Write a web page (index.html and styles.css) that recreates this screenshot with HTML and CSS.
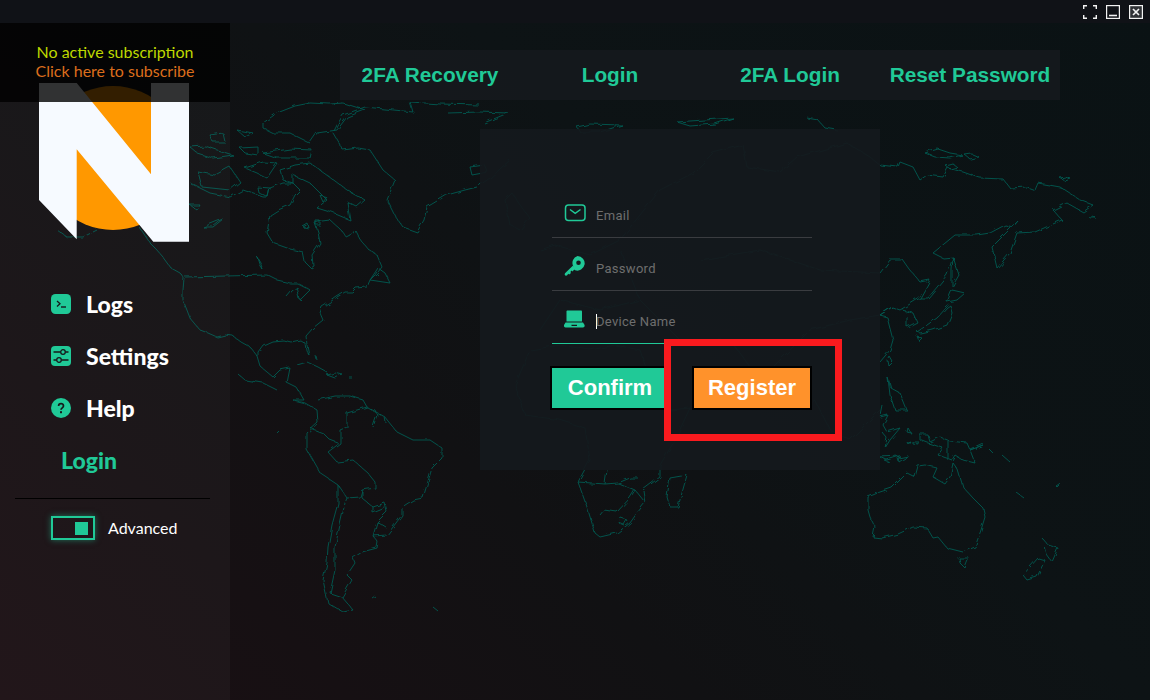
FILE: index.html
```html
<!DOCTYPE html>
<html lang="en">
<head>
    <meta charset="UTF-8">
    <meta name="viewport" content="width=device-width, initial-scale=1.0">
    <title>Login</title>
    <link rel="stylesheet" href="styles.css">
</head>
<body>
    <div class="app">
        <!-- World map behind everything -->
        <svg class="world-map" viewBox="0 0 1150 700" fill="none">
            <defs>
                <filter id="coast" x="0" y="0" width="100%" height="100%">
                    <feTurbulence type="fractalNoise" baseFrequency="0.11" numOctaves="2" seed="4"/>
                    <feDisplacementMap in="SourceGraphic" scale="5"/>
                </filter>
            </defs>
            <g class="coastlines">
            <!-- North America -->
            <path d="M57 230 67 237 83 237 97 230 M140 228 150 243 156 249 163 257 171 268 180 273 184 278 183 290 183 300 190 318 200 330 208 333 217 337 225 335 233 336 241 342 250 347 258 357 261 367 273 377 280 370 290 368 287 383 297 388 300 393 304 400 M258 357 258 352 263 345 272 341 283 340 291 342 300 340 305 343 306 350 309 355 307 345 306 336 313 328 323 320 320 313 322 307 330 302 337 297 345 292 352 292 356 288 367 287 370 280 378 272 382 267 377 255 368 249 363 243 358 236 355 230 351 236 347 238 341 230 330 220 322 221 315 223 318 232 320 243 316 249 312 255 313 265 310 267 305 262 303 252 290 249 273 243 267 233 270 215 278 210 290 205 295 195 300 190 293 183 283 183 270 188 268 197 263 197 243 190 230 197 210 193 190 183"/>
            <path d="M185 277 226 276 267 275 277 280 290 283 297 283 305 287 M237 373 245 380 263 383 277 390 M378 268 370 280 390 283 385 273 378 268Z"/>
            <path d="M263 123 277 113 295 106 310 103 330 104 343 103 365 110 347 117 337 130 317 133 310 143 290 133 273 133 263 128Z M280 170 295 165 310 163 327 175 347 190 365 200 357 207 347 202 350 220 333 213 317 208 327 200 310 183 293 175 293 183 283 180Z M237 130 253 133 245 137Z M240 148 258 147 258 155 245 153Z M263 153 290 149 312 150 310 158 277 158Z M190 147 205 146 217 150 233 155 213 158 197 153Z M210 135 223 133 225 142 213 142Z M198 172 215 175 230 167 240 182 230 190 202 187Z M245 168 263 162 277 163 267 178 257 173Z M257 187 270 188 268 197 258 192Z M320 195 327 197 323 202Z M203 227 223 219 213 227Z M190 205 200 205 197 210Z M257 257 260 262 263 270 260 266Z M287 297 292 291 297 287 300 300 310 290 304 286 M303 227 308 224 309 228Z M316 221 320 221 320 225 316 225Z M297 365 307 362 318 367 327 372 M327 375 335 373 343 375 335 378Z M348 377 352 377 M316 356 317 360"/>
            <!-- Greenland -->
            <path d="M333 133 343 150 358 148 370 150 383 170 395 180 387 200 395 216 403 227 417 232 424 220 427 207 447 195 465 190 477 187 490 178 510 160 M343 115 365 107 413 112 410 102 440 104 480 105 M448 113 480 112 508 113 484 123 M343 115 337 125 333 133"/>
            <!-- South America -->
            <path d="M304 400 293 400 305 403 317 410 318 423 307 433 307 450 320 473 338 485 338 503 332 525 328 547 327 563 323 580 328 603 343 612 353 610 342 597 352 580 347 575 355 563 353 558 362 552 377 548 378 542 373 536 387 535 402 515 402 507 413 500 423 498 432 468 442 458 442 448 430 440 413 440 397 432 385 417 367 407 363 400 350 396 335 396 318 400"/>
            <path d="M367 407 347 413 347 427 340 430 340 443 328 452 337 462 353 460 367 472 375 482 375 488 362 490 362 498 373 507 385 503 387 512 377 522 387 528 M338 485 347 498 345 503 335 547 335 570 330 593 342 597 M347 498 360 497 362 490 M373 507 373 513 385 508 M377 522 373 536 M310 428 323 433 330 440 338 443 M373 427 377 415 375 410 M385 417 386 423 M372 598 375 596 M433 607 438 611 M277 433 279 431"/>
            <!-- Africa -->
            <path d="M578 482 587 507 595 533 600 537 617 533 630 523 637 513 645 503 643 490 660 477 660 465 675 440 690 408 670 410 650 380 640 350 615 345 590 350 560 345 530 350 515 385 525 415 560 420 585 428 590 460 578 482Z M670 478 687 475 678 507 670 507 667 497 670 478Z M578 482 605 484 618 483 635 490 630 498 617 512 604 510 600 515 M605 484 607 470 M618 483 630 478 638 478 M635 490 643 500 M624 525 627 520 621 518 619 523Z"/>
            <!-- Europe and Asia behind the form -->
            <path d="M470 167 485 165 488 172 472 175Z M505 200 512 193 520 205 530 218 520 230 510 225Z M540 250 555 245 590 255 620 240 640 215 660 190 693 173 713 153 743 145 747 167 780 172 797 157 847 143 870 157 880 165 M620 250 640 300 680 340 730 340 760 380 790 350 810 330 850 320 880 315 M640 300 600 310 560 300 540 330 M700 260 760 250 820 270 880 273 M577 127 590 124 622 125 600 132 580 132Z M677 122 690 121 733 118 715 124 690 126Z M807 118 818 120 825 128 837 130 M780 380 800 410 815 400 830 430 850 440 880 410 M892 307 880 315"/>
            <!-- Russia and the far east -->
            <path d="M880 165 898 167 900 162 913 167 920 180 927 175 943 177 948 168 963 172 980 178 1003 179 1010 188 1027 187 1035 190 1038 183 1060 187 1080 200 1093 205 1083 212 1067 203 1053 210 1062 220 1035 232 1017 233 1010 253 997 268 992 247 1018 221 1013 227 1005 225 990 233 977 235 955 235 933 253 943 258 953 257 947 275 928 298 920 298 930 280 920 282 910 270 903 260 890 260 880 273 M920 298 900 310 892 307 880 315 887 317 893 340 890 350 880 362 M902 310 913 313 917 322 907 327 907 317"/>
            <path d="M953 257 959 275 952 287 952 270Z M952 290 965 293 957 300 947 302Z M950 305 952 313 947 325 933 330 920 333 917 332 937 318 947 307Z M917 336 922 338 919 341Z M890 357 893 362 889 366 888 361Z M888 378 891 388 900 393 907 410 895 410 890 395Z M882 405 880 415 M925 153 938 149 950 153 962 155 950 158 935 157Z M965 155 972 154 979 157 970 159Z M1060 178 1065 177 1071 179 1065 181Z M1088 217 1092 216 1096 218 1091 218Z M945 165 952 163 957 167 950 169Z"/>
            <!-- Indonesia and Oceania -->
            <path d="M880 417 888 415 883 425 887 432 900 428 890 440 885 448 887 438 882 432 M908 428 911 433 907 432Z M907 442 910 441 908 444Z M912 441 918 441 918 444 912 443Z M880 457 900 456 887 460Z M898 458 908 456 899 462Z M884 460 889 462"/>
            <path d="M920 435 928 435 930 442 940 437 950 441 967 443 970 450 983 445 970 450 975 463 963 460 955 455 952 460 938 455 943 448 928 443 920 440Z M948 441 948 458 M970 449 983 443 M989 449 994 454 M1002 455 1010 462 M1017 493 1024 498 M1055 485 1061 481 1056 486Z"/>
            <path d="M868 497 880 492 892 488 900 480 907 473 915 477 918 466 925 465 937 468 933 477 945 484 950 477 953 463 958 470 963 487 972 497 983 508 985 517 981 530 975 547 963 552 947 548 938 537 933 538 927 528 913 527 898 534 882 538 873 537 875 527 870 517 868 510Z M959 558 969 558 965 568 960 563Z M1042 538 1048 545 1058 548 1052 562 1047 555 1045 547 M1038 558 1045 560 1037 577 1027 580 1023 575 1030 567Z"/>
            </g>
        </svg>

        <div class="titlebar">
            <svg class="win-icon" viewBox="0 0 14 14" fill="none" stroke="#f2f2f2" stroke-width="1.4">
                <path d="M0.7 4V0.7H4M10 0.7H13.3V4M13.3 10V13.3H10M4 13.3H0.7V10"/>
            </svg>
            <svg class="win-icon" viewBox="0 0 14 14" fill="none" stroke="#f2f2f2" stroke-width="1.2">
                <rect x="0.6" y="0.6" width="12.8" height="12.8"/>
                <path d="M3 10.5H11" stroke-width="1.6"/>
            </svg>
            <svg class="win-icon close-icon" viewBox="0 0 14 14" fill="none" stroke="#f2f2f2" stroke-width="1.2">
                <rect x="0.6" y="0.6" width="12.8" height="12.8" fill="#303236"/>
                <path d="M4 4 10 10M10 4 4 10" stroke-width="1.7"/>
            </svg>
        </div>

        <div class="shell">
            <aside class="sidebar">
                <div class="subscription">
                    <div class="sub-status">No active subscription</div>
                    <div class="sub-link">Click here to subscribe</div>
                </div>

                <svg class="logo" viewBox="39 83 150 159">
                    <circle cx="113" cy="158" r="72" fill="#ff9800"/>
                    <path d="M39 83H76.7L151 174.3V83H189V241.7H153.3L76.7 149.3V239.3L39 200Z" fill="#f6faff"/>
                </svg>

                <nav class="side-nav">
                    <a class="side-link">
                        <svg class="side-icon" viewBox="0 0 20 20">
                            <rect width="20" height="20" rx="4.5" fill="#20c997"/>
                            <path d="M6 7 9 9.7 6 12.4" fill="none" stroke="#16181a" stroke-width="1.3"/>
                            <path d="M10 13H15" stroke="#16181a" stroke-width="1.4"/>
                        </svg>
                        Logs
                    </a>
                    <a class="side-link">
                        <svg class="side-icon" viewBox="0 0 20 20">
                            <rect width="20" height="20" rx="4" fill="#20c997"/>
                            <path d="M2.500 6H9.500M14.500 6H17.500M2.500 14H5.500M10.500 14H17.500" stroke="#16181a" stroke-width="1.3"/>
                            <circle cx="12" cy="6" r="2.300" fill="none" stroke="#16181a" stroke-width="1.3"/>
                            <circle cx="8" cy="14" r="2.300" fill="none" stroke="#16181a" stroke-width="1.3"/>
                        </svg>
                        Settings
                    </a>
                    <a class="side-link">
                        <svg class="side-icon" viewBox="0 0 20 20">
                            <circle cx="10" cy="10" r="10" fill="#20c997"/>
                            <path d="M7.600 8C7.600 4.900 12.500 4.900 12.500 8 12.500 9.900 10 9.800 10 11.800" fill="none" stroke="#16181a" stroke-width="1.7"/>
                            <rect x="9" y="13.200" width="2" height="2" fill="#16181a"/>
                        </svg>
                        Help
                    </a>
                    <a class="side-link login-link">Login</a>
                </nav>

                <div class="side-divider"></div>

                <div class="advanced">
                    <div class="toggle"><span class="toggle-knob"></span></div>
                    <span class="advanced-label">Advanced</span>
                </div>
            </aside>

            <main class="content">
                <div class="top-tabs">
                    <a class="top-tab">2FA Recovery</a>
                    <a class="top-tab">Login</a>
                    <a class="top-tab">2FA Login</a>
                    <a class="top-tab">Reset Password</a>
                </div>

                <section class="login-panel">
                    <div class="field">
                        <svg class="field-icon" viewBox="0 0 22 18" fill="none" stroke="#20c997" stroke-width="1.500">
                            <rect x="1.500" y="1" width="19.500" height="15.500" rx="3"/>
                            <path d="M6 5.500 11.200 9.300 16.500 5.500"/>
                        </svg>
                        <span class="field-text">Email</span>
                    </div>
                    <div class="field">
                        <svg class="field-icon" viewBox="0 0 22 22">
                            <path fill-rule="evenodd" fill="#20c997" d="M13.500 1A7.300 7.300 0 1 1 11 15.200L9 13.200 9.200 11.200A7.300 7.300 0 0 1 13.500 1ZM14.500 5.500A2.300 2.300 0 1 0 14.500 10.100 2.300 2.300 0 1 0 14.500 5.500Z"/>
                            <path fill="#20c997" d="M8.800 10.800 11.400 13.400 8.400 16.400 7.400 15.600 6.400 17 7 18 5.200 19.600 4.200 18.800 3 20.600 1.600 20.800 0.600 19.400 1 18.200Z"/>
                        </svg>
                        <span class="field-text">Password</span>
                    </div>
                    <div class="field field-active">
                        <svg class="field-icon" viewBox="0 0 22 18">
                            <path fill="#20c997" d="M3.500 .5H17C17.600 .5 18 1 18 1.500V11.500H2.500V1.500C2.500 1 2.900 .5 3.500 .5Z"/>
                            <path fill="#20c997" fill-rule="evenodd" d="M1.500 12.500H19L20.600 15V16C20.600 16.800 20 17.400 19 17.400H1.500C.5 17.400 0 16.800 0 16V15ZM7.500 14.800V16H13V14.800Z"/>
                        </svg>
                        <span class="field-text"><span class="caret"></span>Device Name</span>
                    </div>

                    <div class="actions">
                        <button class="action-btn confirm-btn">Confirm</button>
                        <button class="action-btn register-btn">Register</button>
                    </div>
                </section>
            </main>
        </div>

        <!-- Annotation drawn on top of the screenshot -->
        <div class="highlight-box"></div>
    </div>
</body>
</html>
```

FILE: styles.css
```css
* {
    box-sizing: border-box;
}

body {
    margin: 0;
    background-color: #111214;
}

.app {
    position: relative;
    width: 1150px;
    height: 700px;
    overflow: hidden;
    display: flex;
    flex-direction: column;
    background: linear-gradient(45deg, #1b0f13 0%, #111113 38%, #0d1315 62%, #0a1214 100%);
}

.world-map {
    position: absolute;
    top: 0;
    left: 0;
    width: 1150px;
    height: 700px;
    stroke: #045a51;
    stroke-width: 0.9;
    stroke-linejoin: round;
}

.coastlines {
    filter: url(#coast);
}

.titlebar {
    position: relative;
    height: 23px;
    flex-shrink: 0;
    display: flex;
    justify-content: flex-end;
    gap: 9px;
    padding: 5px 7px 0 0;
    background-color: #101217;
}

.win-icon {
    width: 14px;
    height: 14px;
}

.shell {
    position: relative;
    flex: 1;
    display: flex;
}

/* Sidebar */
.sidebar {
    position: relative;
    width: 230px;
    flex-shrink: 0;
    padding-top: 60px;
    background-color: rgba(255, 255, 255, 0.03);
}

.subscription {
    position: absolute;
    top: 0;
    left: 0;
    z-index: 1;
    width: 230px;
    height: 79px;
    padding-top: 19px;
    background-color: rgba(0, 0, 0, 0.8);
    font-family: Lato, sans-serif;
    font-size: 16px;
    line-height: 19px;
    text-align: center;
}

.sub-status {
    color: #bfd800;
}

.sub-link {
    color: #dc6e1c;
}

.logo {
    display: block;
    width: 150px;
    height: 159px;
    margin-left: 39px;
}

.side-nav {
    display: flex;
    flex-direction: column;
    margin-top: 36px;
}

.side-link {
    height: 52px;
    display: flex;
    align-items: center;
    gap: 15px;
    padding-left: 51px;
    font-family: Lato, sans-serif;
    font-size: 23px;
    font-weight: 900;
    color: #ffffff;
}

.side-icon {
    width: 20px;
    height: 20px;
}

.login-link {
    padding-left: 61px;
    color: #20c997;
}

.side-divider {
    height: 1px;
    margin: 12px 20px 0 15px;
    background-color: #000000;
}

.advanced {
    display: flex;
    align-items: center;
    gap: 13px;
    margin: 17px 0 0 51px;
}

.toggle {
    width: 44px;
    height: 24px;
    display: flex;
    align-items: center;
    justify-content: flex-end;
    padding-right: 5px;
    border: 2px solid #20c997;
    box-shadow: 0 0 6px rgba(32, 201, 151, 0.5);
}

.toggle-knob {
    width: 13px;
    height: 13px;
    background-color: #20c997;
}

.advanced-label {
    padding-bottom: 2px;
    font-family: Lato, sans-serif;
    font-size: 16px;
    color: #ffffff;
}

/* Main area */
.content {
    flex: 1;
    padding: 27px 0 0 110px;
}

.top-tabs {
    width: 720px;
    height: 50px;
    display: flex;
    background-color: rgba(24, 27, 31, 0.7);
}

.top-tab {
    width: 180px;
    line-height: 50px;
    text-align: center;
    font-family: "Liberation Sans", Arial, sans-serif;
    font-size: 20.8px;
    font-weight: 700;
    color: #20c997;
}

.login-panel {
    width: 400px;
    height: 341px;
    margin: 29px 0 0 140px;
    padding: 56px 0 0 72px;
    background-color: rgba(20, 25, 29, 0.93);
}

.field {
    width: 260px;
    height: 53px;
    display: flex;
    align-items: center;
    gap: 10px;
    padding: 9px 0 0 12px;
    border-bottom: 1px solid #3a3c40;
}

.field-active {
    border-bottom-color: #20c997;
}

.field-icon {
    width: 22px;
    height: 22px;
    margin-top: -5px;
}

.field-text {
    font-family: Roboto, sans-serif;
    font-size: 13px;
    letter-spacing: 0.3px;
    color: #6e6e6e;
}

.caret {
    display: inline-block;
    width: 1px;
    height: 15px;
    margin-right: -1px;
    vertical-align: -3px;
    background-color: #ffffff;
}

.actions {
    display: flex;
    gap: 22px;
    margin: 22px 0 0 -2px;
}

.action-btn {
    width: 120px;
    height: 44px;
    padding: 0;
    border: 2px solid #000000;
    font-family: "Liberation Sans", Arial, sans-serif;
    font-size: 22px;
    font-weight: 700;
    color: #ffffff;
}

.confirm-btn {
    background-color: #20c997;
}

.register-btn {
    background-color: #ff922b;
}

.highlight-box {
    position: absolute;
    top: 339px;
    left: 664px;
    width: 178px;
    height: 102px;
    border: 7px solid #fa1a1e;
}
```
